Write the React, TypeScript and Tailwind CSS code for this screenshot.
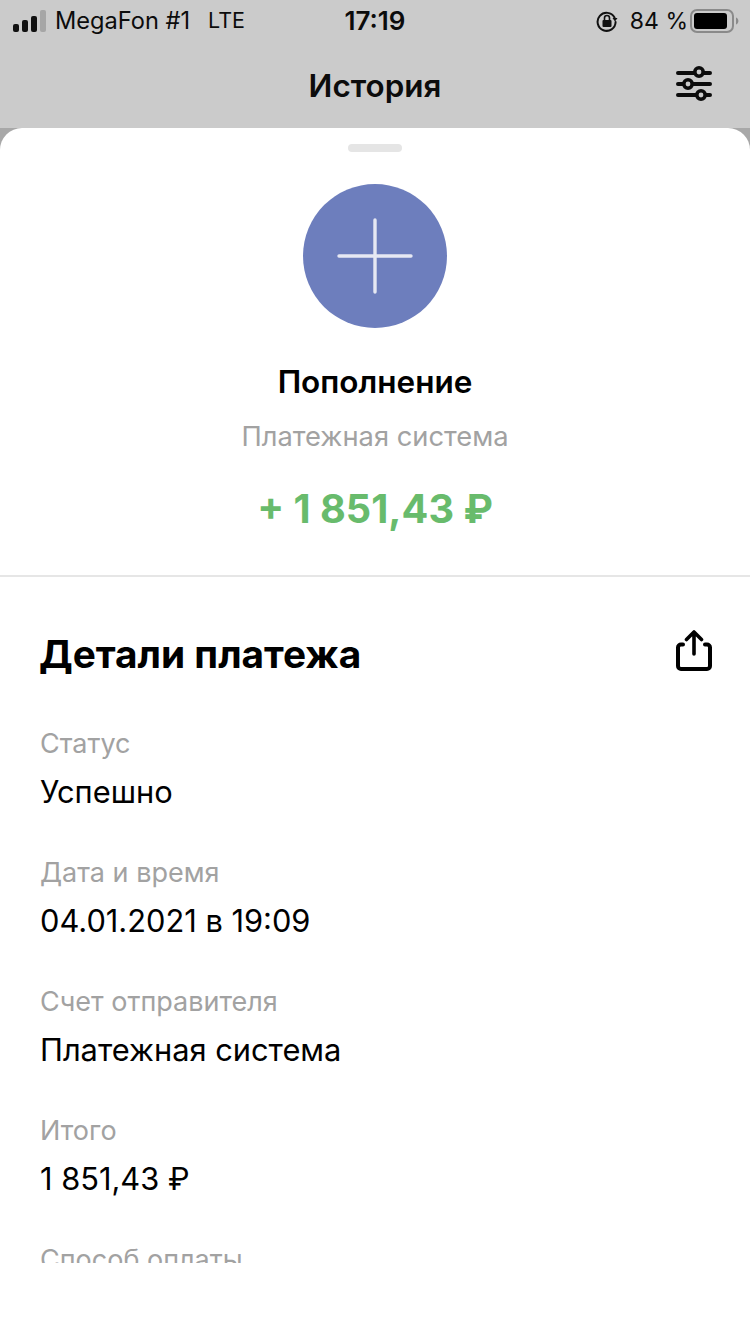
import React from "react";

const font = { fontFamily: "Inter, 'Noto Sans', sans-serif" };

function Row({ label, value }: { label: string; value?: string }) {
  return (
    <div className="h-[129px] shrink-0">
      <div className="h-[48px] text-[27px] leading-[48px] text-[#a2a2a2]">{label}</div>
      {value && <div className="h-[48px] text-[30.8px] leading-[48px] text-black">{value}</div>}
    </div>
  );
}

export default function App() {
  return (
    <div className="flex h-[1334px] w-[750px] flex-col overflow-hidden bg-[#cbcbcb]" style={font}>
      <div className="flex h-[42px] shrink-0 items-center justify-between pl-[13px] pr-[11px] text-[#0c0c0c]">
        <div className="flex w-[300px] items-center">
          <svg width="33" height="22" viewBox="0 0 33 22" fill="none">
            <rect x="0" y="14" width="6" height="8" rx="2" fill="#111" />
            <rect x="9" y="10" width="6" height="12" rx="2" fill="#111" />
            <rect x="18" y="6" width="6" height="16" rx="2" fill="#111" />
            <rect x="27" y="0" width="6" height="22" rx="2" fill="#a6a6a6" />
          </svg>
          <span className="ml-[9px] text-[23.6px] leading-none">MegaFon #1</span>
          <span className="ml-[18px] text-[21.5px] leading-none">LTE</span>
        </div>
        <div className="-translate-x-px text-[26px] font-semibold leading-none">17:19</div>
        <div className="flex w-[300px] items-center justify-end">
          <svg width="22" height="22" viewBox="0 0 22 22" fill="none">
            <path d="M18.5 7.5A9 9 0 1 0 19.6 12" stroke="#111" strokeWidth="2" strokeLinecap="round" />
            <path d="M16.5 8h5l-2.5 3.4z" fill="#111" />
            <rect x="6.5" y="10" width="9" height="7" rx="1" fill="#111" />
            <path d="M8.5 10V8a2.5 2.5 0 0 1 5 0v2" stroke="#111" strokeWidth="1.6" />
          </svg>
          <span className="ml-[12px] text-[23px] leading-none">84 %</span>
          <svg className="ml-[2px]" width="49" height="24" viewBox="0 0 49 24" fill="none">
            <rect x="1" y="1" width="42" height="22" rx="6" stroke="#8a8a8a" strokeWidth="2" />
            <rect x="4" y="4" width="33" height="16" rx="3" fill="#000" />
            <path d="M46 8.5c1.6.6 2.4 2 2.4 3.5s-.8 2.9-2.4 3.5z" fill="#8a8a8a" />
          </svg>
        </div>
      </div>

      <div className="relative flex h-[86px] shrink-0 items-center justify-center pt-[3px]">
        <div className="text-[31.4px] font-semibold leading-none text-[#0c0c0c]">История</div>
        <svg className="absolute right-[37px] top-[22px]" width="38" height="38" viewBox="0 0 38 38" fill="none">
          <path d="M3 9h32M3 20h32M3 31h32" stroke="#0c0c0c" strokeWidth="4" strokeLinecap="round" />
          <circle cx="24" cy="8" r="4.2" fill="#cbcbcb" stroke="#0c0c0c" strokeWidth="3.6" />
          <circle cx="13" cy="20" r="4.2" fill="#cbcbcb" stroke="#0c0c0c" strokeWidth="3.6" />
          <circle cx="26" cy="31" r="4.2" fill="#cbcbcb" stroke="#0c0c0c" strokeWidth="3.6" />
        </svg>
      </div>

      <div className="flex min-h-0 flex-1 flex-col bg-[#a8a8a8]">
        <div className="flex flex-1 flex-col rounded-t-[22px] bg-white">
          <div className="mx-auto mt-[16px] h-[8px] w-[54px] rounded-full bg-[#e5e5e5]" />
          <div className="mx-auto mt-[32px] flex h-[144px] w-[144px] items-center justify-center rounded-full bg-[#6d7ebd]">
            <svg width="76" height="76" viewBox="0 0 76 76" fill="none">
              <path d="M38 2v72M2 38h72" stroke="#e6e8f3" strokeWidth="3.4" strokeLinecap="round" />
            </svg>
          </div>
          <div className="mt-[34px] text-center text-[31.5px] font-semibold leading-[40px] text-black">Пополнение</div>
          <div className="mt-[15px] text-center text-[27.3px] leading-[40px] text-[#a2a2a2]">Платежная система</div>
          <div className="mt-[27px] text-center text-[39.7px] font-bold leading-[50px] text-[#68bb6c]">+ 1 851,43 ₽</div>

          <div className="mt-[41px] h-[2px] shrink-0 bg-[#e6e6e6]" />

          <div className="flex items-center justify-between pl-[39px] pr-[38px] pt-[52px]">
            <div className="text-[38.8px] font-bold leading-[50px] text-black">Детали платежа</div>
            <svg className="mb-[7px]" width="36" height="41" viewBox="0 0 36 41" fill="none">
              <path d="M7 14.5H5a3 3 0 0 0-3 3V36a3 3 0 0 0 3 3h26a3 3 0 0 0 3-3V17.5a3 3 0 0 0-3-3h-2" stroke="#000" strokeWidth="4" strokeLinecap="round" />
              <path d="M18 24V3M10.5 9.5L18 2l7.5 7.5" stroke="#000" strokeWidth="3.6" strokeLinecap="round" strokeLinejoin="round" />
            </svg>
          </div>

          <div className="mt-[41px] flex h-[543px] flex-col overflow-hidden pl-[40px]">
            <Row label="Статус" value="Успешно" />
            <Row label="Дата и время" value="04.01.2021 в 19:09" />
            <Row label="Счет отправителя" value="Платежная система" />
            <Row label="Итого" value="1 851,43 ₽" />
            <Row label="Способ оплаты" />
          </div>
        </div>
      </div>
    </div>
  );
}
